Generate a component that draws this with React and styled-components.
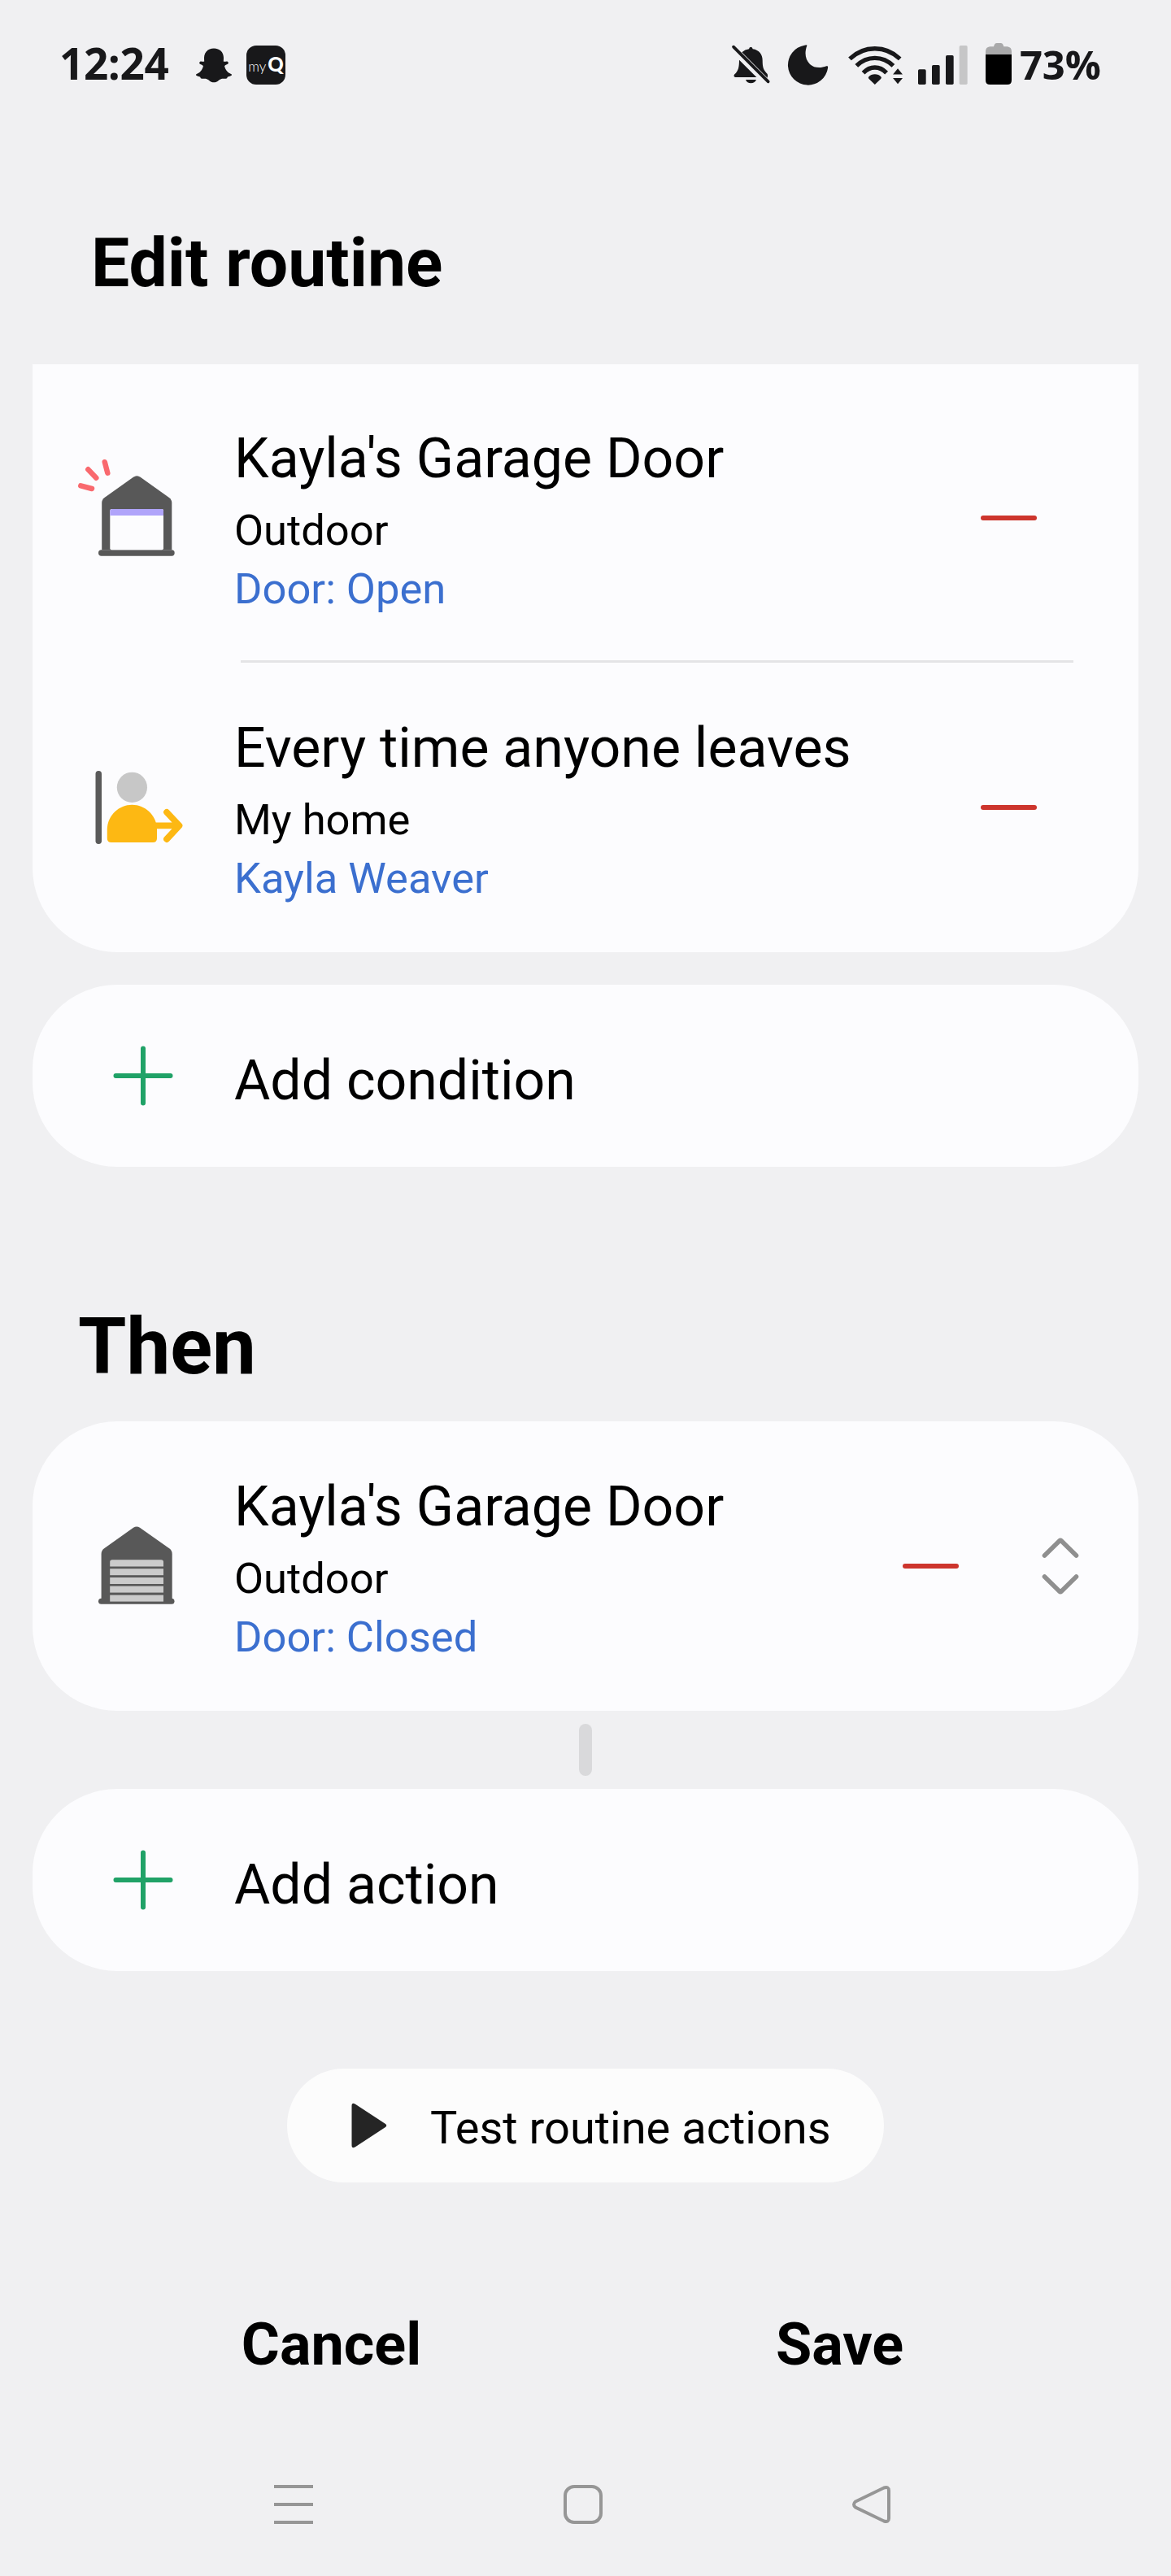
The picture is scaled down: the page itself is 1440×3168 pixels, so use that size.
import React from "react";
import styled, { createGlobalStyle } from "styled-components";

const GlobalStyle = createGlobalStyle`
  * {
    box-sizing: border-box;
  }
  body {
    margin: 0;
    background: #f0f0f2;
    font-family: Roboto, "Noto Sans", sans-serif;
    color: #000;
  }
  svg {
    display: block;
    flex-shrink: 0;
    overflow: visible;
  }
`;

const Screen = styled.div`
  width: 1440px;
  height: 3168px;
  display: flex;
  flex-direction: column;
  overflow: hidden;
  background: #f0f0f2;
`;
const StatusBar = styled.div`
  height: 160px;
  padding: 0 84px 0 73px;
  display: flex;
  justify-content: space-between;
  align-items: center;
  color: #18181a;
`;
const StatusGroup = styled.div`
  display: flex;
  align-items: center;
`;
const Clock = styled.div`
  width: 168px;
  padding-bottom: 4px;
  font-family: "Open Sans", sans-serif;
  font-size: 53px;
  font-weight: 700;
  line-height: 60px;
  letter-spacing: -0.4px;
  white-space: nowrap;
`;
const AppBadge = styled.div`
  width: 48px;
  height: 48px;
  margin-left: 18px;
  border-radius: 12px;
  background: #18181a;
  color: #fff;
  display: flex;
  justify-content: center;
  align-items: baseline;
  font-family: Lato, sans-serif;
  line-height: 46px;
  span {
    font-size: 17px;
    font-weight: 300;
  }
  b {
    margin-left: 2px;
    font-size: 24px;
    font-weight: 900;
  }
`;
const StatusIcon = styled.svg`
  width: ${({ $w }) => $w}px;
  height: 54px;
  margin-right: ${({ $gap }) => $gap}px;
`;
const BatteryLevel = styled.div`
  width: 102px;
  padding-bottom: 2px;
  font-family: "Open Sans", sans-serif;
  font-size: 49px;
  font-weight: 700;
  line-height: 60px;
  letter-spacing: -0.2px;
  white-space: nowrap;
`;

const Header = styled.div`
  height: 288px;
  padding: 114px 112px 0;
  h1 {
    margin: 0;
    font-size: 84px;
    line-height: 100px;
    font-weight: 700;
  }
`;
const SectionTitle = styled.h2`
  height: 313px;
  margin: 0;
  padding: 165px 96px 0;
  font-size: 96px;
  line-height: 112px;
  font-weight: 700;
`;
const Card = styled.div`
  margin: 0 40px;
  padding-top: ${({ $cut }) => ($cut ? "11px" : "0")};
  background: #fcfcfe;
  border-radius: ${({ $cut }) => ($cut ? "0 0 104px 104px" : "104px")};
`;
const Row = styled.div`
  position: relative;
  height: 356px;
  padding: 0 ${({ $sortable }) => ($sortable ? "72px" : "125px")} 0 48px;
  display: flex;
  align-items: center;
  &:not(:last-child)::after {
    content: "";
    position: absolute;
    left: 256px;
    right: 80px;
    bottom: 0;
    height: 3px;
    background: #e4e4e6;
  }
`;
const RowText = styled.div`
  flex: 1;
  align-self: flex-start;
  margin: 65px 0 0 56px;
  white-space: nowrap;
  h3 {
    margin: 0 0 12px;
    font-size: 68px;
    line-height: 80px;
    font-weight: 400;
  }
  p {
    margin: 0;
    font-size: 52.5px;
    line-height: 72px;
  }
  p + p {
    color: #3b6fcf;
  }
`;
const Minus = styled.div`
  width: 69px;
  height: 6px;
  border-radius: 3px;
  background: #cd352d;
`;
const Sorter = styled.svg`
  width: 48px;
  height: 72px;
  margin-left: 101px;
`;
const AddRow = styled.div`
  height: 224px;
  margin: ${({ $spaced }) => ($spaced ? "40px" : "0")} 40px 0;
  padding: 12px 0 0 248px;
  border-radius: 104px;
  background: #fcfcfe;
  display: flex;
  align-items: center;
  font-size: 68px;
  line-height: 80px;
  svg {
    width: 74px;
    height: 74px;
    margin: -12px 75px 0 -149px;
  }
`;
const Connector = styled.div`
  height: 96px;
  display: flex;
  justify-content: center;
  align-items: center;
  &::before {
    content: "";
    width: 16px;
    height: 64px;
    border-radius: 8px;
    background: #d9d9db;
  }
`;
const TestButton = styled.div`
  width: 734px;
  height: 140px;
  margin: 120px 0 0 353px;
  padding-left: 79px;
  border-radius: 70px;
  background: #fcfcfc;
  display: flex;
  align-items: center;
  font-size: 56px;
  line-height: 64px;
  white-space: nowrap;
  svg {
    width: 44px;
    height: 56px;
    margin-right: 53px;
  }
  span {
    padding-top: 5px;
  }
`;
const Actions = styled.div`
  margin-top: 158px;
  padding: 0 95px;
  display: flex;
  font-size: 72px;
  line-height: 84px;
  font-weight: 700;
  div {
    flex: 1;
    text-align: center;
  }
`;
const NavBar = styled.div`
  margin-top: 130px;
  padding: 0 344px 0 337px;
  display: flex;
  justify-content: space-between;
  svg {
    width: 48px;
    height: 48px;
    fill: none;
    stroke: #969696;
    stroke-width: 4;
  }
`;

const SnapGhost = () => (
  <svg width="44" height="43" viewBox="0 0 44 43" fill="#18181a">
    <path d="M22 .5C29.500.5 34 5.600 34 12c0 1.700-.1 3.200-.2 4.500 1.800.9 3.500-.5 5 .2 1.600.8 1.200 2.500-.3 3.400-1.500.9-3.200 1.200-3.400 2.500 1.300 4.900 4.700 8.600 8.400 9.600.8.500.6 1.300-.2 1.900-1.400 1-3.400 1.200-4.500 1.700-.5.700-.2 1.500-1.200 1.800-2.200.500-5-.3-7.500.8-2.500 1.200-4.300 3.900-8.100 3.900s-5.600-2.700-8.100-3.900c-2.500-1.100-5.300-.3-7.500-.8-1-.3-.7-1.100-1.200-1.800-1.100-.5-3.100-.7-4.500-1.700-.8-.6-1-1.400-.2-1.900 3.700-1 7.100-4.700 8.400-9.600-.2-1.300-1.900-1.600-3.400-2.500-1.500-.9-1.900-2.600-.3-3.400 1.500-.7 3.200.7 5-.2C10.100 15.200 10 13.700 10 12 10 5.600 14.500.5 22 .5Z" />
  </svg>
);

const BellOff = () => (
  <StatusIcon $w={47} $gap={22} viewBox="62 69 141 162" fill="#18181a">
    <path d="M99 103Q110 93 125 91Q126 83 132 83Q138 83 139 91C163 94 175 112 175 133C175 160 179 169 193 183Q196 190 193 197Z" />
    <path d="M89 131L153 195H74Q66 192 72 184C85 172 89 160 89 131Z" />
    <path d="M113 204H152Q146 217 132 217T113 204Z" />
    <path d="M68 83L196 211" stroke="#18181a" strokeWidth="11" strokeLinecap="round" />
  </StatusIcon>
);

const Moon = () => (
  <StatusIcon $w={49} $gap={25} viewBox="268 69 147 162" fill="#18181a">
    <path d="M338 79C328 105 332 131 349 147C365 162 389 162 410 154Q417 152 415 161A74 74 0 1 1 329 77Q339 74 338 79Z" />
  </StatusIcon>
);

const Wifi = () => (
  <StatusIcon $w={67} $gap={19} viewBox="489 69 202 162" fill="none" stroke="#18181a" strokeWidth="16">
    <path d="M495 127Q535 89 588 89T681 127" />
    <path d="M520 153Q549 124 588 124T656 153" />
    <path d="M545 179Q564 159 588 159T631 179" />
    <path
      d="M588 184Q602 184 611 194Q614 198 610 201L588 222L566 201Q562 198 565 194Q574 184 588 184Z"
      fill="#18181a"
      stroke="none"
    />
    <path d="M673 163L691 185H655ZM655 198H691L673 220Z" fill="#18181a" stroke="none" />
  </StatusIcon>
);

const Signal = () => (
  <StatusIcon $w={61} $gap={22} viewBox="748 69 183 162" fill="#18181a">
    <rect x="748" y="166" width="29" height="56" rx="5" />
    <rect x="799" y="150" width="29" height="72" rx="5" />
    <rect x="850" y="114" width="29" height="108" rx="5" />
    <rect x="900" y="78" width="30" height="144" rx="5" fill="#c6c6c7" />
  </StatusIcon>
);

const Battery = () => (
  <StatusIcon $w={32} $gap={10} viewBox="996 69 96 162">
    <path
      d="M1012 82H1026Q1029 69 1037 69H1052Q1060 69 1063 82H1076Q1092 84 1092 100V111H996V100Q996 84 1012 82Z"
      fill="#a9a9aa"
    />
    <path d="M996 111H1092V206Q1092 222 1076 222H1012Q996 222 996 206Z" fill="#000" />
  </StatusIcon>
);

const GarageOpen = () => (
  <svg width="144" height="144" viewBox="0 0 144 144">
    <path
      d="M76 21.800Q80.300 18.800 84.600 21.800L120 47Q123.300 49.500 123.300 53.500V111.300H37.200V53.500Q37.200 49.500 40.500 47Z"
      fill="#585858"
    />
    <rect x="33" y="111.300" width="93.700" height="7.400" rx="3.700" fill="#585858" />
    <rect x="47.300" y="61" width="65.700" height="50.300" rx="2" fill="#fcfcfe" />
    <path d="M47.300 69V63.500Q47.300 61 50 61H110.500Q113 61 113 63.500V69Z" fill="#b0a4fa" />
    <g stroke="#f9696e" strokeWidth="6.500" strokeLinecap="round">
      <path d="M40.800 3.200L44.300 16.700" />
      <path d="M20.300 12.300L30.300 22.700" />
      <path d="M11.300 32.300L25 36" />
    </g>
  </svg>
);

const GarageClosed = () => (
  <svg width="144" height="144" viewBox="0 0 144 144">
    <path
      d="M76 24.800Q80 22 84 24.800L120.500 50.500Q123.700 53 123.700 57V115H36.600V57Q36.600 53 39.800 50.500Z"
      fill="#585858"
    />
    <rect x="33" y="111.700" width="93.500" height="7" rx="3.500" fill="#585858" />
    <path d="M47.200 72.400V67Q47.200 64.200 50 64.200H110.200Q113 64.200 113 67V72.400Z" fill="#cbcbcb" />
    {[75.2, 86, 96.6, 107.6].map((y) => (
      <rect key={y} x="47.200" y={y} width="65.800" height="8" fill="#cbcbcb" />
    ))}
  </svg>
);

const PersonLeaving = () => (
  <svg width="144" height="144" viewBox="0 0 144 144">
    <rect x="29.500" y="27" width="7.500" height="90" rx="3.700" fill="#5a5a5a" />
    <circle cx="74.400" cy="47.300" r="18.600" fill="#c7c7c7" />
    <path
      d="M43.800 99.300C43.800 82.400 57.500 68.700 74.400 68.700S105 82.400 105 99.300V110Q105 115 100 115H48.800Q43.800 115 43.800 110Z"
      fill="#fdb813"
    />
    <path
      d="M103 94.300H132M117 77.800L132.500 94.300L117 111"
      fill="none"
      stroke="#fdb813"
      strokeWidth="7.800"
      strokeLinecap="round"
      strokeLinejoin="round"
    />
  </svg>
);

const Plus = () => (
  <svg viewBox="0 0 74 74" stroke="#20a267" strokeWidth="6" strokeLinecap="round">
    <path d="M37 3.500V70.500M3.500 37H70.500" />
  </svg>
);

const conditions = [
  { icon: <GarageOpen />, title: "Kayla's Garage Door", place: "Outdoor", state: "Door: Open" },
  { icon: <PersonLeaving />, title: "Every time anyone leaves", place: "My home", state: "Kayla Weaver" },
];

const RoutineRow = ({ icon, title, place, state, sortable }) => (
  <Row $sortable={sortable}>
    {icon}
    <RowText>
      <h3>{title}</h3>
      <p>{place}</p>
      <p>{state}</p>
    </RowText>
    <Minus />
    {sortable && (
      <Sorter viewBox="0 0 48 72" fill="none" stroke="#8f8f8f" strokeWidth="5.600" strokeLinecap="round" strokeLinejoin="round">
        <path d="M4.500 23L22.800 5Q24 4 25.200 5L43.500 23M4.500 49L22.800 67Q24 68 25.200 67L43.500 49" />
      </Sorter>
    )}
  </Row>
);

const App = () => {
  return (
    <>
      <GlobalStyle />
      <Screen>
        <StatusBar>
          <StatusGroup>
            <Clock>12:24</Clock>
            <SnapGhost />
            <AppBadge>
              <span>my</span>
              <b>Q</b>
            </AppBadge>
          </StatusGroup>
          <StatusGroup>
            <BellOff />
            <Moon />
            <Wifi />
            <Signal />
            <Battery />
            <BatteryLevel>73%</BatteryLevel>
          </StatusGroup>
        </StatusBar>
        <Header>
          <h1>Edit routine</h1>
        </Header>
        <Card $cut>
          {conditions.map((item) => (
            <RoutineRow key={item.title} {...item} />
          ))}
        </Card>
        <AddRow $spaced>
          <Plus />
          Add condition
        </AddRow>
        <SectionTitle>Then</SectionTitle>
        <Card>
          <RoutineRow icon={<GarageClosed />} title="Kayla's Garage Door" place="Outdoor" state="Door: Closed" sortable />
        </Card>
        <Connector />
        <AddRow>
          <Plus />
          Add action
        </AddRow>
        <TestButton>
          <svg viewBox="0 0 44 56" fill="#252525">
            <path d="M.5 4Q.5 -1 5 1.800L42 26Q44.500 28 42 30L5 54.200Q.5 57 .5 52Z" />
          </svg>
          <span>Test routine actions</span>
        </TestButton>
        <Actions>
          <div>Cancel</div>
          <div>Save</div>
        </Actions>
        <NavBar>
          <svg viewBox="0 0 48 48">
            <path d="M0 2H48M0 24H48M0 46H48" />
          </svg>
          <svg viewBox="0 0 48 48">
            <rect x="2" y="2" width="44" height="44" rx="11" />
          </svg>
          <svg viewBox="0 0 48 48">
            <path d="M4 20.500L39 3.500Q45 1.500 45 7V41Q45 46.500 39 44.500L4 27.500Q0 24 4 20.500Z" />
          </svg>
        </NavBar>
      </Screen>
    </>
  );
};

export default App;
